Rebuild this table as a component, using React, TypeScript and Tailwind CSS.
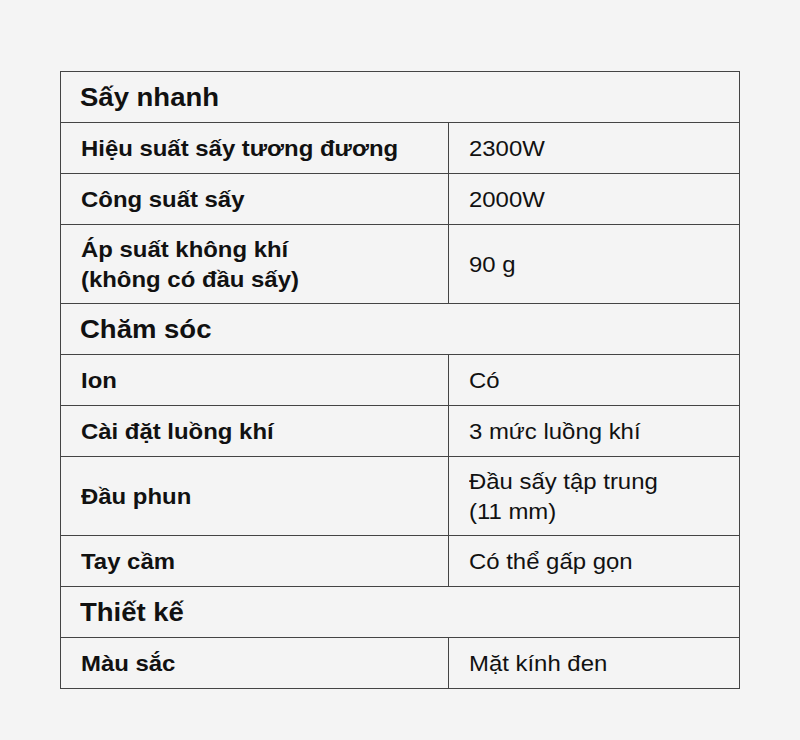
const sections = [
  {
    title: "Sấy nhanh",
    rows: [
      { label: ["Hiệu suất sấy tương đương"], value: ["2300W"] },
      { label: ["Công suất sấy"], value: ["2000W"] },
      { label: ["Áp suất không khí", "(không có đầu sấy)"], value: ["90 g"] },
    ],
  },
  {
    title: "Chăm sóc",
    rows: [
      { label: ["Ion"], value: ["Có"] },
      { label: ["Cài đặt luồng khí"], value: ["3 mức luồng khí"] },
      { label: ["Đầu phun"], value: ["Đầu sấy tập trung", "(11 mm)"] },
      { label: ["Tay cầm"], value: ["Có thể gấp gọn"] },
    ],
  },
  {
    title: "Thiết kế",
    rows: [{ label: ["Màu sắc"], value: ["Mặt kính đen"] }],
  },
]

// the source type is a touch wider than Arial, so stretch it horizontally
function Lines({ lines }: { lines: string[] }) {
  return (
    <div className="origin-left scale-x-[1.087]">
      {lines.map((l) => (
        <div key={l}>{l}</div>
      ))}
    </div>
  )
}

export default function App() {
  return (
    <div
      className="min-h-[740px] w-[800px] bg-[#f4f4f4] pt-[71px] pl-[60px] text-[#111]"
      style={{ fontFamily: '"Liberation Sans", Arial, sans-serif' }}
    >
      <table className="w-[680px] border-collapse">
        <colgroup>
          <col className="w-[388px]" />
          <col />
        </colgroup>
        <tbody>
          {sections.map((s) => (
            <>
              <tr key={s.title} className="h-[51px]">
                <td
                  colSpan={2}
                  className="border border-[#444] pl-[19px] text-[25px] font-bold leading-[30px]"
                >
                  <div className="origin-left scale-x-[1.1]">{s.title}</div>
                </td>
              </tr>
              {s.rows.map((r) => (
                <tr
                  key={r.label[0]}
                  className={r.label.length > 1 || r.value.length > 1 ? "h-[79px]" : "h-[51px]"}
                >
                  <td className="border border-[#444] pt-[2px] pl-[20px] text-[22px] font-bold leading-[30px]">
                    <Lines lines={r.label} />
                  </td>
                  <td className="border border-[#444] pt-[2px] pl-[20px] text-[22px] leading-[30px]">
                    <Lines lines={r.value} />
                  </td>
                </tr>
              ))}
            </>
          ))}
        </tbody>
      </table>
    </div>
  )
}
